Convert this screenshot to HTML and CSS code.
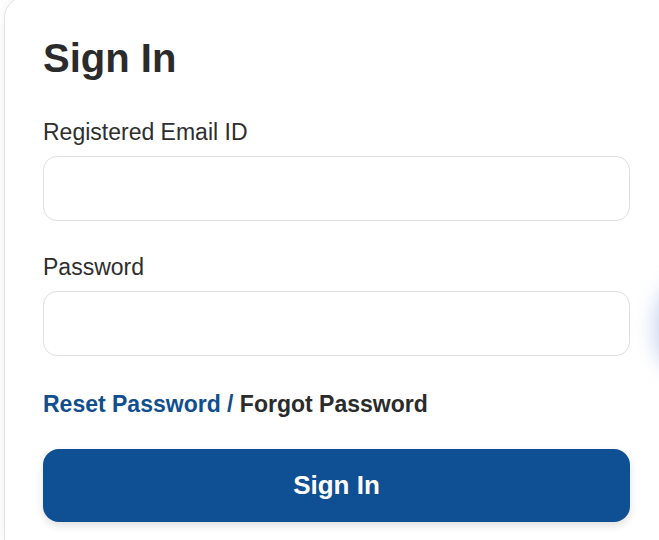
FILE: index.html
```html
<!DOCTYPE html>
<html lang="en">
<head>
    <meta charset="UTF-8">
    <meta name="viewport" content="width=device-width, initial-scale=1.0">
    <title>Sign In</title>
    <link rel="stylesheet" href="styles.css">
</head>
<body>
    <div class="glow"></div>
    <div class="card">
        <h1>Sign In</h1>
        <form class="login-form">
            <div class="field">
                <label for="email">Registered Email ID</label>
                <input type="text" id="email" name="email">
            </div>
            <div class="field">
                <label for="password">Password</label>
                <input type="password" id="password" name="password">
            </div>
            <p class="links"><a href="#" class="reset-link">Reset Password /</a> <a href="#" class="forgot-link">Forgot Password</a></p>
            <button type="submit" class="signin-button">Sign In</button>
        </form>
    </div>
</body>
</html>
```

FILE: styles.css
```css
html,
body {
    overflow: hidden;
}

body {
    font-family: Arial, "Liberation Sans", sans-serif;
    background-color: #fff;
    color: #2e2e2e;
    margin: 0;
    padding: 0;
}

/* soft blue blob peeking in from the right */
.glow {
    position: absolute;
    left: 654px;
    top: 280px;
    width: 60px;
    height: 95px;
    border-radius: 50%;
    background-color: rgba(120, 150, 210, 0.4);
    filter: blur(10px);
    z-index: 2;
}

.card {
    width: 587px;
    margin: -4px 0 0 4px;
    padding: 37px 39px 40px 38px;
    background-color: #fff;
    border: 1px solid #e3e3e3;
    border-radius: 22px;
    box-shadow: 0 0 12px rgba(0, 0, 0, 0.06);
}

h1 {
    margin: 0 0 36px;
    font-size: 40px;
    line-height: 48px;
    font-weight: bold;
    color: #2b2b2b;
}

.login-form {
    display: flex;
    flex-direction: column;
    gap: 32px;
}

.field label {
    display: block;
    margin-bottom: 10px;
    font-size: 23px;
    line-height: 28px;
}

.field input {
    display: block;
    width: 100%;
    height: 65px;
    padding: 0 16px;
    border: 1px solid #dedede;
    border-radius: 14px;
    box-sizing: border-box;
    font-size: 20px;
    outline: none;
}

.links {
    margin: 2px 0 -1px;
    font-size: 23px;
    line-height: 28px;
    font-weight: bold;
}

.links a {
    text-decoration: none;
}

.reset-link {
    color: #114e8e;
}

.forgot-link {
    color: #2b2b2b;
}

.signin-button {
    width: 100%;
    height: 73px;
    background-color: #0f4f94;
    color: #fff;
    border: none;
    border-radius: 16px;
    font-family: inherit;
    font-size: 26px;
    font-weight: bold;
    cursor: pointer;
    box-shadow: 0 4px 8px rgba(0, 0, 0, 0.12);
}
```
